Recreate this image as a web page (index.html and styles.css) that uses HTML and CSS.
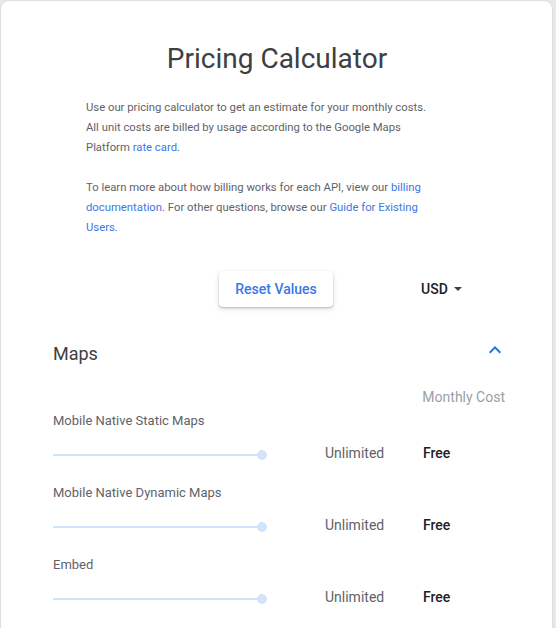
FILE: index.html
```html
<!DOCTYPE html>
<html lang="en">
<head>
<meta charset="utf-8">
<title>Pricing Calculator</title>
<link rel="stylesheet" href="styles.css">
</head>
<body>
<div class="card">
  <h1 class="title">Pricing Calculator</h1>
  <div class="intro">
    <p>Use our pricing calculator to get an estimate for your monthly costs. All unit costs are billed by usage according to the Google Maps Platform <a href="#">rate card</a>.</p>
    <p>To learn more about how billing works for each API, view our <a href="#">billing documentation</a>. For other questions, browse our <a href="#">Guide for Existing Users</a>.</p>
  </div>
  <div class="actions">
    <button class="reset">Reset Values</button>
    <div class="currency">USD <span class="caret"></span></div>
  </div>
  <section class="section">
    <div class="section-head">
      <h2>Maps</h2>
      <svg class="chevron" width="24" height="24" viewBox="0 0 24 24"><path d="M7.41 15.41L12 10.83l4.59 4.58L18 14l-6-6-6 6z" fill="#1a73e8"/></svg>
    </div>
    <div class="cost-head">Monthly Cost</div>
    <div class="row">
      <div class="label">Mobile Native Static Maps</div>
      <div class="controls">
        <div class="slider"><span class="track"></span><span class="thumb"></span></div>
        <div class="qty">Unlimited</div>
        <div class="cost">Free</div>
      </div>
    </div>
    <div class="row">
      <div class="label">Mobile Native Dynamic Maps</div>
      <div class="controls">
        <div class="slider"><span class="track"></span><span class="thumb"></span></div>
        <div class="qty">Unlimited</div>
        <div class="cost">Free</div>
      </div>
    </div>
    <div class="row">
      <div class="label">Embed</div>
      <div class="controls">
        <div class="slider"><span class="track"></span><span class="thumb"></span></div>
        <div class="qty">Unlimited</div>
        <div class="cost">Free</div>
      </div>
    </div>
  </section>
</div>
</body>
</html>
```
FILE: styles.css
```css
* { box-sizing: border-box; }
html, body { margin: 0; padding: 0; }
body {
  background: #e9e9e9;
  font-family: Roboto, "Noto Sans", Arial, sans-serif;
  height: 628px;
  overflow: hidden;
}
.card {
  margin: 1px 4px 0 1px;
  background: #fff;
  border-radius: 8px 8px 0 0;
  box-shadow: 0 0 2px rgba(0,0,0,0.15);
  padding: 40px 47px 0 52px;
  height: 640px;
}
.title {
  margin: 0 0 0 -4px;
  text-align: center;
  font-size: 28px;
  font-weight: 400;
  line-height: 36px;
  color: #3c4043;
}
.intro {
  width: 350px;
  margin: 21px 0 0 33px;
  font-size: 11.3px;
  line-height: 20px;
  color: #5f6368;
}
.intro p { margin: 0 0 20px; }
.intro p:last-child { margin-bottom: 0; }
.intro a { color: #3b78e7; text-decoration: none; }
.actions {
  display: flex;
  align-items: center;
  margin-top: 33px;
  padding-left: 166px;
}
.reset {
  width: 114px;
  height: 36px;
  border: 0;
  border-radius: 4px;
  background: #fff;
  color: #3b78e7;
  font-family: inherit;
  font-size: 14px;
  font-weight: 500;
  box-shadow: 0 1px 2px rgba(60,64,67,0.3), 0 2px 5px rgba(60,64,67,0.15);
}
.currency {
  margin-left: 88px;
  font-size: 14px;
  font-weight: 500;
  color: #202124;
  display: flex;
  align-items: center;
}
.caret {
  margin-left: 6px;
  width: 0;
  height: 0;
  border-left: 4px solid transparent;
  border-right: 4px solid transparent;
  border-top: 4px solid #3c4043;
}
.section { margin-top: 30px; }
.section-head {
  display: flex;
  justify-content: space-between;
  align-items: center;
  height: 32px;
}
.section-head h2 {
  margin: 0;
  font-size: 18px;
  font-weight: 400;
  color: #3c4043;
}
.chevron { margin-right: -2px; margin-top: -6px; }
.cost-head {
  margin-top: 18px;
  text-align: right;
  font-size: 14px;
  line-height: 20px;
  color: #9aa0a6;
  margin-bottom: 4px;
}
.row { padding-bottom: 20px; }
.label {
  font-size: 13px;
  line-height: 20px;
  color: #5f6368;
  margin-bottom: 12px;
}
.controls {
  display: grid;
  grid-template-columns: 272px 98px 1fr;
  align-items: center;
  height: 20px;
}
.slider {
  position: relative;
  width: 214px;
  height: 10px;
  display: flex;
  align-items: center;
  top: 2px;
}
.track {
  display: block;
  width: 209px;
  height: 2px;
  background: #d2e3fc;
}
.thumb {
  position: absolute;
  right: 0;
  top: 0;
  width: 10px;
  height: 10px;
  border-radius: 50%;
  background: #d2e3fc;
}
.qty {
  font-size: 14px;
  color: #5f6368;
}
.cost {
  font-size: 14px;
  font-weight: 500;
  color: #202124;
}
```
